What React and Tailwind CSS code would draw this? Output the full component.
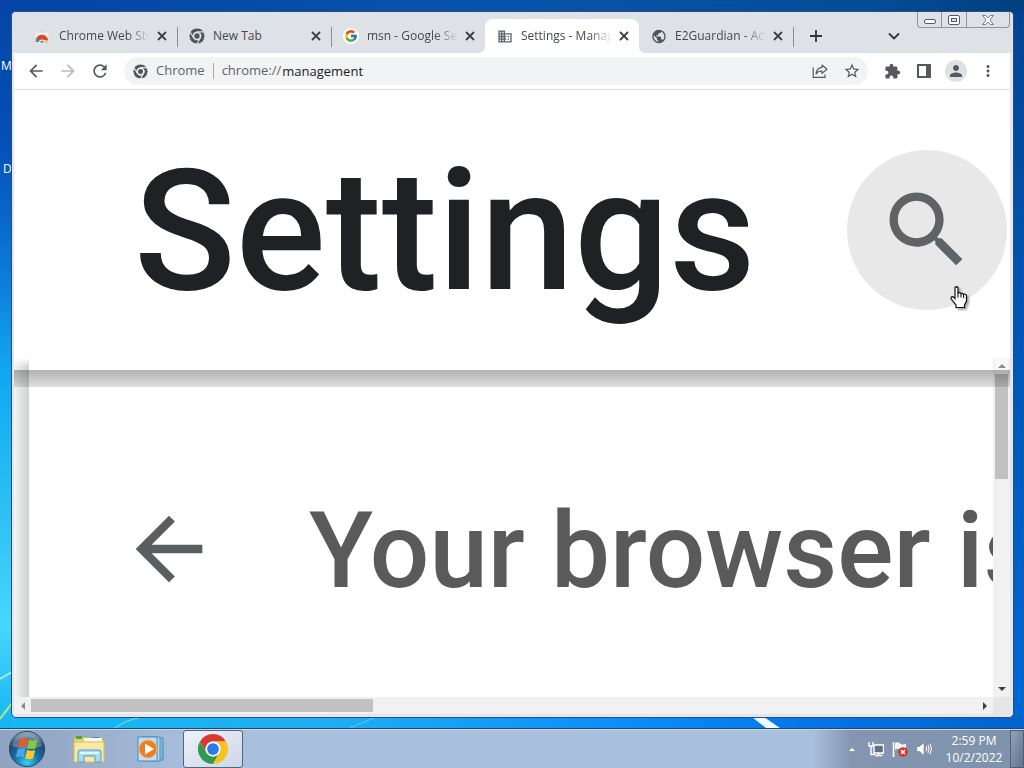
import React from "react";
import {
  MdArrowBack,
  MdArrowForward,
  MdRefresh,
  MdExtension,
  MdStarBorder,
  MdPerson,
  MdMoreVert,
  MdDomain,
  MdPublic,
  MdSearch,
} from "react-icons/md";
import { FcGoogle } from "react-icons/fc";

const RED_ARC = "M3.2146 12A24 24 0 0 1 44.7854 12H24A12 12 0 0 0 13.6077 30Z";
const GREEN_ARC = "M3.2146 12L13.6077 30A12 12 0 0 0 34.3923 30L24 48A24 24 0 0 1 3.2146 12Z";
const YELLOW_ARC = "M44.7854 12A24 24 0 0 1 24 48L34.3923 30A12 12 0 0 0 24 12Z";

function ChromeLogo({ className }) {
  return (
    <svg viewBox="0 0 48 48" className={className} aria-hidden="true">
      <path d={RED_ARC} fill="#d93a2f" />
      <path d={GREEN_ARC} fill="#2f9a50" />
      <path d={YELLOW_ARC} fill="#f9c31f" />
      <circle cx="24" cy="24" r="12" fill="#fff" />
      <circle cx="24" cy="24" r="9.4" fill="#3079e8" />
    </svg>
  );
}

function ChromeMono({ className, gap = "#dee1e6" }) {
  return (
    <svg viewBox="0 0 48 48" className={className} aria-hidden="true">
      <g fill="#50555a" stroke={gap} strokeWidth="3">
        <path d={RED_ARC} />
        <path d={GREEN_ARC} />
        <path d={YELLOW_ARC} />
      </g>
      <circle cx="24" cy="24" r="12" fill={gap} />
      <circle cx="24" cy="24" r="8" fill="#50555a" />
    </svg>
  );
}

function WebStoreIcon() {
  return (
    <svg viewBox="0 0 16 16" className="size-4" aria-hidden="true">
      <path d="M4.500 4.500Q4.500 2.500 7 2.500Q9.500 2.500 9.500 4.500" fill="none" stroke="#cfd3d6" />
      <path d="M.5 4.500H13.500V14.500H.5Z" fill="#eceef0" />
      <path d="M.8 14A6.200 6.200 0 0 1 13.200 12H7Z" fill="#dc4437" />
      <path d="M.8 14A6.200 6.200 0 0 1 2 10.300L6 14Z" fill="#3da35c" />
      <path d="M8.500 12H13.200V14.500H8.500Z" fill="#f4c22b" />
      <path d="M4 14.500A3 3 0 0 1 10 14.500Z" fill="#fff" />
      <path d="M5 14.500A2 2 0 0 1 9 14.500Z" fill="#4285f4" />
    </svg>
  );
}

function StrokeIcon({ d, className }) {
  return (
    <svg
      viewBox="0 0 12 12"
      className={className}
      fill="none"
      stroke="currentColor"
      strokeWidth="1.8"
      aria-hidden="true"
    >
      <path d={d} />
    </svg>
  );
}

function Wallpaper() {
  return (
    <svg
      className="absolute inset-0 size-full"
      viewBox="0 0 1024 728"
      preserveAspectRatio="none"
      aria-hidden="true"
    >
      <defs>
        <linearGradient id="sky" x1="0" y1="0" x2="0" y2="1">
          <stop offset="0" stopColor="#024391" />
          <stop offset="0.35" stopColor="#0052ae" />
          <stop offset="1" stopColor="#0068d4" />
        </linearGradient>
        <linearGradient id="west" x1="0" y1="0" x2="0" y2="1">
          <stop offset="0" stopColor="#0445a6" />
          <stop offset="0.2" stopColor="#0450b8" />
          <stop offset="0.38" stopColor="#0a7cda" />
          <stop offset="0.5" stopColor="#12a4f0" />
          <stop offset="0.7" stopColor="#2cc0f6" />
          <stop offset="0.86" stopColor="#48d6fb" />
          <stop offset="1" stopColor="#14b4f2" />
        </linearGradient>
        <linearGradient id="north" x1="0" y1="0" x2="1" y2="0">
          <stop offset="0" stopColor="#0445a6" />
          <stop offset="0.5" stopColor="#0654aa" />
          <stop offset="0.85" stopColor="#034c96" />
          <stop offset="1" stopColor="#023f80" />
        </linearGradient>
        <linearGradient id="south" x1="0" y1="0" x2="1" y2="0">
          <stop offset="0" stopColor="#12b8f4" />
          <stop offset="0.3" stopColor="#20b0f2" />
          <stop offset="0.62" stopColor="#0a8cfa" />
          <stop offset="0.8" stopColor="#0474e8" />
          <stop offset="1" stopColor="#0064cc" />
        </linearGradient>
      </defs>
      <rect width="1024" height="728" fill="url(#sky)" />
      <rect width="1024" height="12" fill="url(#north)" />
      <rect y="716" width="1024" height="12" fill="url(#south)" />
      <rect width="12" height="728" fill="url(#west)" />
      <path d="M0 679L12 672" stroke="#a8ecff" strokeWidth="2" />
      <path d="M0 719L12 703" stroke="#b4e884" strokeWidth="2" />
      <path d="M115 728Q126 720 142 717" stroke="#8be0fa" fill="none" />
      <path d="M350 728L376 717" stroke="#58ccee" />
      <path d="M752 717L764 717L780 728L766 728Z" fill="#f2fbff" />
    </svg>
  );
}

function Tab({ icon, title, active, divider, wide }) {
  return (
    <div
      role="presentation"
      className={
        "relative flex h-[34px] w-[154px] shrink-0 items-center pl-3 " +
        (active
          ? "rounded-t-lg bg-white before:absolute before:bottom-0 before:-left-1.5 before:size-1.5 before:bg-[radial-gradient(circle_at_0_0,transparent_6px,white_6px)] after:absolute after:-right-1.5 after:bottom-0 after:size-1.5 after:bg-[radial-gradient(circle_at_100%_0,transparent_6px,white_6px)]"
          : "")
      }
    >
      <span className="flex size-4 shrink-0 items-center justify-center">{icon}</span>
      <button
        type="button"
        role="tab"
        aria-selected={!!active}
        className={
          "ml-2 h-6 w-[91px] overflow-hidden text-left text-xs whitespace-nowrap text-[#45494d] " +
          (wide ? "mask-r-from-75% mask-r-to-100%" : "")
        }
      >
        {title}
      </button>
      <button
        type="button"
        aria-label={"Close " + title}
        className="ml-1 flex size-4 items-center justify-center text-[#3c4043]"
      >
        <StrokeIcon d="M2 2L10 10M10 2L2 10" className="size-3" />
      </button>
      {divider && <span className="absolute top-2 -right-px h-5 w-px bg-[#8a8d92]" />}
    </div>
  );
}

function WindowControls() {
  const cell = "flex items-center justify-center border-[#8f949b]";
  return (
    <div className="mr-[3px] flex h-4 shrink-0 self-start rounded-b border border-t-0 border-[#8f949b]">
      <button type="button" aria-label="Minimize" className={cell + " w-6 border-r"}>
        <svg viewBox="0 0 12 5" className="mt-1 h-[5px] w-3">
          <rect x="0.5" y="0.5" width="11" height="4" rx="1.5" fill="#fff" stroke="#555b66" />
        </svg>
      </button>
      <button type="button" aria-label="Maximize" className={cell + " w-[25px] border-r"}>
        <svg viewBox="0 0 12 10" className="h-2.5 w-3">
          <rect x="0.5" y="0.5" width="11" height="9" rx="1.5" fill="#fff" stroke="#555b66" />
          <rect x="3.5" y="3.5" width="5" height="3" fill="#dee1e6" stroke="#555b66" />
        </svg>
      </button>
      <button type="button" aria-label="Close window" className={cell + " w-[42px]"}>
        <svg viewBox="0 0 12 10" className="h-2.5 w-3">
          <path
            d="M.6 .5H3.6L6 2.9L8.4.5H11.4L7.8 5L11.4 9.5H8.4L6 7.1L3.6 9.5H.6L4.2 5Z"
            fill="#fff"
            stroke="#6b707a"
            strokeWidth="0.9"
          />
        </svg>
      </button>
    </div>
  );
}

function TabStrip() {
  return (
    <div className="flex h-[41px] shrink-0 items-end rounded-t bg-[#dee1e6] pl-[11px]">
      <div role="tablist" className="flex">
        <Tab icon={<WebStoreIcon />} title="Chrome Web Store" divider wide />
        <Tab icon={<ChromeMono className="size-4" />} title="New Tab" divider />
        <Tab
          icon={
            <span className="flex size-4 items-center justify-center rounded-full bg-white">
              <FcGoogle className="size-3.5" />
            </span>
          }
          title="msn - Google Search"
          wide
        />
        <Tab
          icon={<MdDomain className="size-[17px] text-[#5f6368]" />}
          title="Settings - Management"
          active
          wide
        />
        <Tab
          icon={<MdPublic className="size-[17px] text-[#50555a]" />}
          title="E2Guardian - Access Denied"
          divider
          wide
        />
      </div>
      <button
        type="button"
        aria-label="New tab"
        className="ml-[11px] flex h-[34px] w-6 items-center justify-center text-[#303337]"
      >
        <StrokeIcon d="M6 0V12M0 6H12" className="size-3" />
      </button>
      <div className="flex-1" />
      <button
        type="button"
        aria-label="Search tabs"
        className="mr-[11px] flex h-[34px] w-6 items-center justify-center text-[#303337]"
      >
        <StrokeIcon d="M1 3.500L6 8.500L11 3.500" className="size-3" />
      </button>
      <WindowControls />
    </div>
  );
}

function ToolButton({ label, children, className = "text-[#55595e]" }) {
  return (
    <button
      type="button"
      aria-label={label}
      className={"flex size-8 shrink-0 items-center justify-center " + className}
    >
      {children}
    </button>
  );
}

function Toolbar() {
  return (
    <div className="flex h-[37px] shrink-0 items-center border-b border-[#dcdee0] bg-white px-1.5">
      <ToolButton label="Back">
        <MdArrowBack className="size-5" />
      </ToolButton>
      <ToolButton label="Forward" className="text-[#b9bbbe]">
        <MdArrowForward className="size-5" />
      </ToolButton>
      <ToolButton label="Reload">
        <MdRefresh className="size-5" />
      </ToolButton>
      <div className="mx-2 flex h-7 min-w-0 flex-1 items-center rounded-full bg-[#f1f3f4] pl-[9px] text-[13px] text-[#5f6368]">
        <ChromeMono className="size-[15px] shrink-0" gap="#f1f3f4" />
        <span className="ml-2">Chrome</span>
        <span className="mx-2 h-4 w-px bg-[#a9acb0]" />
        <label htmlFor="address">chrome://</label>
        <input
          id="address"
          type="text"
          defaultValue="management"
          className="h-6 min-w-0 flex-1 bg-transparent pl-px text-[#202124] outline-none"
        />
        <ToolButton label="Share this page">
          <svg viewBox="0 0 16 16" className="size-4" fill="none" stroke="currentColor" strokeWidth="1.2">
            <path d="M1.2 4.5V14.4H13V11.5" />
            <path d="M10 2L15 6.2L10 10.4V8Q6 7.8 4 11Q4.6 5 10 4.4Z" strokeLinejoin="round" />
          </svg>
        </ToolButton>
        <ToolButton label="Bookmark this page">
          <MdStarBorder className="size-[18px]" />
        </ToolButton>
      </div>
      <ToolButton label="Extensions">
        <MdExtension className="size-[17px]" />
      </ToolButton>
      <ToolButton label="Side panel">
        <svg viewBox="0 0 14 14" className="size-3.5">
          <path fillRule="evenodd" d="M0 0H14V14H0ZM2 2V12H9V2Z" fill="currentColor" />
        </svg>
      </ToolButton>
      <ToolButton label="Profile">
        <span className="flex size-[22px] items-center justify-center rounded-full bg-[#dee1e6]">
          <MdPerson className="size-[18px]" />
        </span>
      </ToolButton>
      <ToolButton label="Menu">
        <MdMoreVert className="size-[18px]" />
      </ToolButton>
    </div>
  );
}

function HandCursor() {
  return (
    <svg
      viewBox="0 0 18 23"
      className="absolute top-[136px] left-[103px] h-[23px] w-[18px] drop-shadow-[2px_2px_1px_rgba(0,0,0,0.35)]"
      aria-hidden="true"
    >
      <path
        d="M5 1.5Q6.5 0 8 1.5V7Q9.5 6 11 7.5Q12.5 6.8 13.5 8.3Q15.5 7.6 16.5 9.5V15L14.5 19V21.5H6V19L1.2 13Q.5 11 2.2 10.6Q3.5 10.6 5 12.5Z"
        fill="#fff"
        stroke="#111"
        strokeWidth="1.2"
      />
      <path d="M8 7V11.5M11 7.8V11.5M13.6 8.6V12" stroke="#111" strokeWidth="1.1" />
    </svg>
  );
}

function PageHeader() {
  return (
    <header className="flex h-[268px] shrink-0 items-center justify-between pt-3 pr-[3px] pl-[120px]">
      <h1 className="pt-1 font-[Roboto,sans-serif] text-[168px] leading-none font-medium text-[#202124]">
        Settings
      </h1>
      <div className="relative shrink-0">
        <button
          type="button"
          aria-label="Search settings"
          className="flex size-40 items-center justify-center rounded-full bg-[#e8e8e8] text-[#5f6366]"
        >
          <MdSearch className="size-[100px]" />
        </button>
        <HandCursor />
      </div>
    </header>
  );
}

function Triangle({ d, className }) {
  return (
    <svg viewBox="0 0 8 8" className={"size-2 " + className} aria-hidden="true">
      <path d={d} fill="currentColor" />
    </svg>
  );
}

function PageBody() {
  return (
    <div className="relative flex min-h-0 flex-1">
      <div className="w-[15px] shrink-0 bg-linear-to-r from-[#f3f4f4] to-[#cfd2d1] mask-t-from-[330px] mask-t-to-100%" />
      <main className="flex min-w-0 flex-1 items-center overflow-hidden pt-[43px] pl-[90px]">
        <button type="button" aria-label="Back" className="shrink-0 text-[#5a5e60]">
          <MdArrowBack className="size-[100px]" />
        </button>
        <h2 className="ml-[90px] pt-1 font-[Roboto,sans-serif] text-[105px] leading-none font-medium whitespace-nowrap text-[#5a5a5a]">
          Your browser is managed
        </h2>
      </main>
      <div className="flex w-[17px] shrink-0 flex-col bg-[#f1f1f1] px-0.5">
        <div className="flex h-4 items-center justify-center bg-[#f8f8f8]">
          <Triangle d="M0 6L4 2L8 6Z" className="text-[#8c8c8c]" />
        </div>
        <div className="h-[105px] bg-[#c1c1c1]" />
        <div className="flex-1" />
        <div className="flex h-[17px] items-center justify-center">
          <Triangle d="M0 2H8L4 6Z" className="text-[#404040]" />
        </div>
      </div>
      <div className="pointer-events-none absolute inset-x-0 top-3 h-[17px] bg-linear-to-b from-black/30 via-black/22 to-black/12" />
    </div>
  );
}

function HorizontalScrollbar() {
  return (
    <div className="flex h-[17px] shrink-0 bg-[#f1f1f1] py-0.5">
      <div className="flex w-[17px] items-center justify-center">
        <Triangle d="M6 0V8L2 4Z" className="text-[#8c8c8c]" />
      </div>
      <div className="w-[342px] bg-[#c1c1c1]" />
      <div className="flex-1" />
      <div className="flex w-[17px] items-center justify-center">
        <Triangle d="M2 0L6 4L2 8Z" className="text-[#404040]" />
      </div>
      <div className="-my-0.5 w-[17px] bg-[#e6e6e6]" />
    </div>
  );
}

function BrowserWindow() {
  return (
    <section
      aria-label="Browser"
      className="relative flex min-w-0 flex-1 flex-col rounded-[5px] border border-[#2c4f74] bg-[#e2e6ee]"
    >
      <TabStrip />
      <div className="mr-[3px] mb-[3px] ml-0.5 flex min-h-0 flex-1 flex-col bg-white">
        <Toolbar />
        <PageHeader />
        <PageBody />
        <HorizontalScrollbar />
      </div>
    </section>
  );
}

function StartOrb() {
  return (
    <svg viewBox="0 0 38 38" className="size-[38px]" aria-hidden="true">
      <defs>
        <radialGradient id="orb" cx="0.5" cy="0.9" r="0.9">
          <stop offset="0" stopColor="#35d0f0" />
          <stop offset="0.4" stopColor="#1272a8" />
          <stop offset="0.75" stopColor="#23496f" />
          <stop offset="1" stopColor="#a9bccb" />
        </radialGradient>
      </defs>
      <circle cx="19" cy="19" r="17.5" fill="url(#orb)" stroke="#24405e" />
      <path d="M4 16A15.500 15.500 0 0 1 34 16Q19 22 4 16Z" fill="#fff" opacity="0.25" />
      <path d="M12 9.500Q15.500 7 19.500 9L17.800 17.500Q14 15.600 10 17.600Z" fill="#ee5a24" />
      <path d="M21 9.800Q25 11.500 29.500 9.600L27.500 18.200Q23.500 20 19.300 18Z" fill="#8cc63e" />
      <path d="M9.600 19.200Q13.500 17.300 17.500 19.200L15.700 27.500Q12 25.600 7.800 27.600Z" fill="#4aa6ea" />
      <path d="M19 19.800Q23 21.700 27.100 20L25.200 28.400Q21.200 30 17.200 28.200Z" fill="#fbc928" />
    </svg>
  );
}

function ExplorerIcon() {
  return (
    <svg viewBox="0 0 34 30" className="h-[30px] w-[34px]" aria-hidden="true">
      <path d="M2 3H14L15 5H32V28H2Z" fill="#e9cf74" stroke="#c0a552" />
      <path d="M4 2H10V5H4Z" fill="#4da64e" />
      <path d="M20 3H27V6H20Z" fill="#3a8fd0" />
      <path d="M12 4H30V9H12Z" fill="#fff8dc" />
      <path d="M2 8H32V28H2Z" fill="#f9e9a4" stroke="#d5bd6c" />
      <path d="M6 28V18Q6 16 8 16H27Q29 16 29 18V28H23V22H12V28Z" fill="#a5dcf2" stroke="#4d9fc8" />
      <path d="M8 19H27" stroke="#e4f7fd" strokeWidth="2" />
    </svg>
  );
}

function MediaPlayerIcon() {
  return (
    <svg viewBox="0 0 30 28" className="h-7 w-[30px]" aria-hidden="true">
      <path d="M9 3H27V25H9Z" fill="#7fb9de" stroke="#4c88b4" />
      <path d="M6 2H24V26H6Z" fill="#a9d3ec" stroke="#5795be" />
      <path d="M2 2H21V26H2Z" fill="#bfdff2" stroke="#4c88b4" />
      <circle cx="12" cy="14" r="9" fill="#ee7e22" stroke="#f7b27a" />
      <path d="M9 8.500L18 14L9 19.500Z" fill="#fff" />
    </svg>
  );
}

function Tray() {
  return (
    <div className="flex items-center">
      <button type="button" aria-label="Show hidden icons" className="flex h-6 w-4 items-center justify-center">
        <svg viewBox="0 0 8 5" className="h-[5px] w-2">
          <path d="M0 4.500L4 .5L8 4.500Z" fill="#fff" stroke="#5b6b80" strokeWidth="0.5" />
        </svg>
      </button>
      <button type="button" aria-label="Network" className="ml-2 flex size-4 items-center justify-center">
        <svg viewBox="0 0 16 16" className="size-4">
          <path d="M6 4H15.500V12H6Z" fill="#5c7088" stroke="#fff" strokeWidth="1.4" />
          <path d="M7 14.500H14.500M10.500 12V14.500M3 6V13.500H7M1 1V5H5V1M3 5V7" stroke="#fff" strokeWidth="1.4" fill="none" />
        </svg>
      </button>
      <button type="button" aria-label="Action Center" className="ml-2 flex size-4 items-center justify-center">
        <svg viewBox="0 0 16 16" className="size-4">
          <path d="M1.500 1V16" stroke="#fff" strokeWidth="1.600" />
          <path d="M3 2Q6 .5 8 2.500T14 2.500V9Q11 10 8 8.500T3 9Z" fill="#f4f6f8" />
          <circle cx="11" cy="11" r="4.800" fill="#d8322a" />
          <path d="M9 9L13 13M13 9L9 13" stroke="#fff" strokeWidth="1.500" />
        </svg>
      </button>
      <button type="button" aria-label="Volume" className="ml-2 flex size-4 items-center justify-center">
        <svg viewBox="0 0 16 16" className="size-4">
          <path d="M.8 5.500H3.500L8 1.500V14.500L3.500 10.500H.8Z" fill="#fff" stroke="#6d7d92" strokeWidth="0.600" />
          <path d="M10 5.500Q11.500 8 10 10.500M12 4Q14.200 8 12 12M14 2.800Q17 8 14 13.200" stroke="#fff" fill="none" />
        </svg>
      </button>
      <time className="mr-1.5 ml-3 w-[60px] text-center text-xs leading-[17px] text-white">
        2:59 PM
        <br />
        10/2/2022
      </time>
    </div>
  );
}

function Taskbar() {
  return (
    <footer className="relative flex h-10 shrink-0 border-t border-[#22466c] bg-linear-to-r from-[#8fa2bf] via-[#a8c0de] via-20% to-[#a8c0de]">
      <div className="flex min-w-0 flex-1 border-t border-[#c9d8ea]">
        <button type="button" aria-label="Start" className="flex w-[54px] items-center justify-center">
          <StartOrb />
        </button>
        <button type="button" aria-label="File Explorer" className="ml-1.5 flex w-[58px] items-center justify-center">
          <ExplorerIcon />
        </button>
        <button type="button" aria-label="Media Player" className="ml-1 flex w-[58px] items-center justify-center">
          <MediaPlayerIcon />
        </button>
        <button
          type="button"
          aria-label="Chrome"
          className="ml-[3px] flex w-[60px] items-center justify-center rounded-[3px] border border-[#51657f] bg-linear-to-br from-[#eef1f7] to-[#cdd7e8]"
        >
          <ChromeLogo className="size-[30px]" />
        </button>
        <div className="flex-1" />
        <div className="flex bg-linear-to-r from-transparent via-[#8496af] via-20% to-[#7f93ad] pl-8">
          <Tray />
        </div>
        <button
          type="button"
          aria-label="Show desktop"
          className="w-3.5 border border-[#4d6079] bg-linear-to-br from-[#93a3b8] to-[#5f738d]"
        />
      </div>
    </footer>
  );
}

export default function App() {
  return (
    <div className="flex h-screen flex-col overflow-hidden font-['Open_Sans',sans-serif]">
      <div className="relative flex min-h-0 flex-1 overflow-hidden pt-[11px] pr-2.5 pb-2.5 pl-[11px]">
        <Wallpaper />
        <span className="absolute top-[58px] left-px text-xs text-white">M</span>
        <span className="absolute top-[161px] left-[3px] text-xs text-white">D</span>
        <BrowserWindow />
      </div>
      <Taskbar />
    </div>
  );
}
